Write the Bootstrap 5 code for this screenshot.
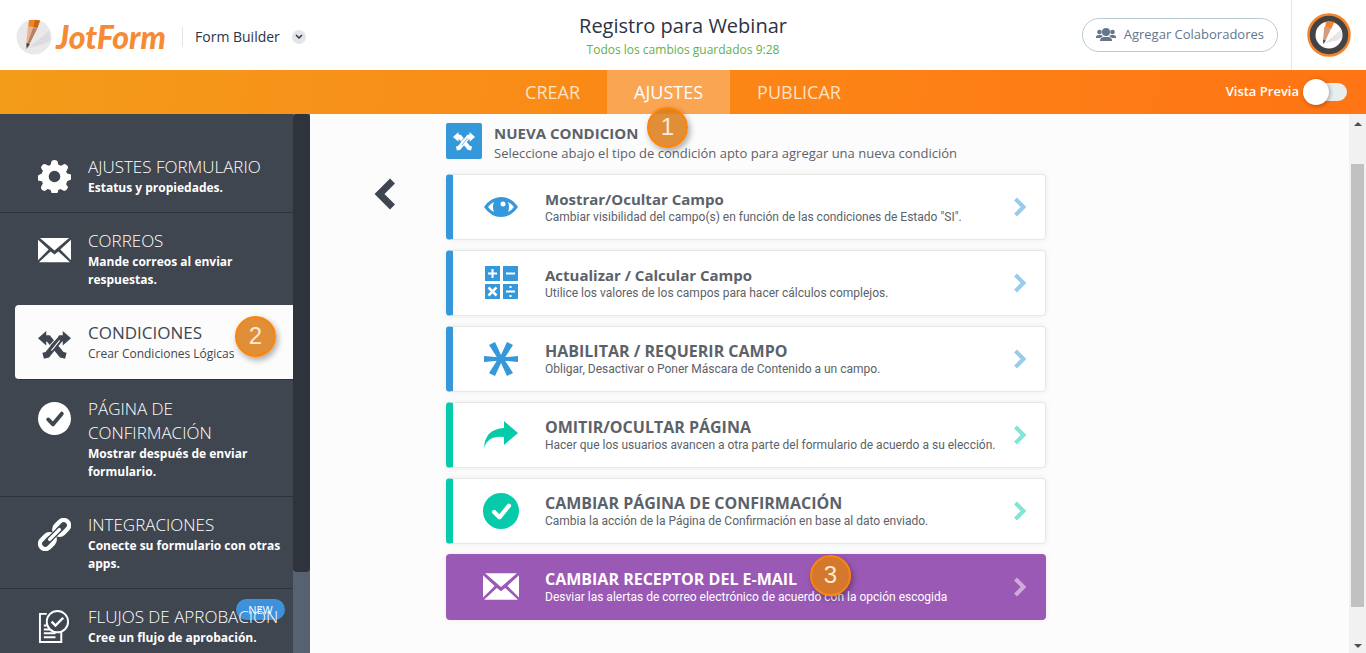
<!DOCTYPE html>
<html lang="es">
<head>
<meta charset="utf-8">
<meta name="viewport" content="width=device-width, initial-scale=1">
<title>JotForm - Registro para Webinar</title>
<link href="https://cdn.jsdelivr.net/npm/bootstrap@5.3.0/dist/css/bootstrap.min.css" rel="stylesheet">
<style>
body{font-family:"Open Sans","Noto Sans",sans-serif;font-size:12px;color:#5c6269;background:#fcfcfc}
a{text-decoration:none;color:inherit}
.topbar{height:70px;display:grid;grid-template-columns:1fr auto 1fr;background:#fff}
.wordmark{font:italic 900 32px/40px Lato,"Liberation Sans",sans-serif;color:#f78b35}
.product{font-size:14px;color:#2c3345;border-left:1px solid #e3e5e8;line-height:20px}
.drop{width:14px;height:14px;border-radius:50%;background:#e3e5e8}
.form-name{font-size:20px;line-height:28px;color:#2c3345;font-weight:400}
.saved{line-height:20px;color:#64b04c}
.invite{height:34px;border:1px solid #b9ccd2;border-radius:17px;background:#fff;color:#65768c;font-size:13px;padding:0 13px;margin-right:13px}
.account{border-left:1px solid #e3e5e8;padding:0 15px}
.modebar{height:44px;display:grid;grid-template-columns:1fr auto 1fr;background:linear-gradient(100deg,#f39c1a,#fb8716 50%,#ff7414)}
.mode{position:relative;font-size:18px;line-height:45px;height:44px;padding:0 27px;color:#ffe1c4}
.mode.current{background:#faa552;color:#fff}
.preview{color:#fff;font-size:13px;font-weight:600;padding-right:19px}
.preview input{appearance:none;margin:0;width:44px;height:18px;border-radius:9px;background:linear-gradient(90deg,transparent 14px,#e8eeee 14px);position:relative}
.preview input::before{content:"";position:absolute;left:0;top:-4px;width:26px;height:26px;border-radius:50%;background:#fff;box-shadow:1px 1px 4px #0005}
.step{position:absolute;width:41px;height:41px;border:2px solid #fb8409;border-radius:50%;background:#dc7d19dd;color:#fdebd6;font:24px/36px "Liberation Sans",sans-serif;text-align:center;box-shadow:2px 3px 6px #0005;z-index:5}
.step-mode{left:40px;top:37px}
.step-item{right:17px;top:11px}
.step-choice{left:357px;top:0}
.side{width:310px;background:#3f4650;color:#fff}
.side-list{padding-top:25px;min-width:0}
.item{position:relative;display:flex;gap:17px;padding:16px 10px 15px 38px;border-bottom:1px solid #2f343c}
.item svg{width:33px;height:33px;flex:none;margin-top:5px}
.item-name{display:block;font-size:17px;line-height:24px;font-weight:300}
.item-note{display:block;line-height:18px;font-weight:700}
.item.chosen{margin-left:15px;margin-bottom:1px;padding-left:23px;padding-right:4px;background:#fcfcfc;color:#3f4650;border-radius:4px 0 0 4px;padding-bottom:16px}
.chosen .item-name,.chosen .item-note{font-weight:400}
.chosen svg{margin-top:7px}
.item.bare{border-bottom-color:transparent}
.new{position:absolute;right:8px;top:10px;height:21px;width:49px;border-radius:11px;background:#3e92dc;line-height:22px;text-align:center;font-size:11px}
.side-track{width:17px;background:#566272}
.side-thumb{height:85%;background:#2f333c;border-radius:4px}
.back{margin:64px 50px 0 64px;border:0;background:none;padding:0}
.panel{flex:0 1 600px;padding-top:9px}
.panel-head{margin-bottom:11px}
.tile{width:36px;height:36px;background:#3498db;border-radius:2px}
.head-name{font-size:15px;line-height:20px;font-weight:700;margin:0}
.head-note{font-size:13px;line-height:20px}
.choices{gap:10px}
.choice{position:relative;display:flex;align-items:center;height:66px;border:1px solid #e8e8e6;border-left:7px solid var(--tone);border-radius:4px;background:#fff;box-shadow:0 0 6px #0001;padding:0 18px 0 30px;color:#5c6269}
.choice>svg:first-child{width:36px;height:36px;color:var(--tone)}
.choice-text{margin-left:26px;flex:1}
.choice-name{display:block;font-size:15px;line-height:20px;font-weight:700}
.choice-name.caps{font-size:16px}
.choice-note{display:block;line-height:16px;white-space:nowrap;font-family:Roboto,"Open Sans",sans-serif}
.arrow{width:14px;height:20px;color:var(--tone);opacity:.5}
.blue{--tone:#3498db}.green{--tone:#05cbaa}
.purple{--tone:#9b59b6;background:#9b59b6;color:#fff;border-color:#9b59b6}
.purple>svg:first-child{color:#fff}.purple .arrow{color:#fff}
.track{width:17px;background:#f1f1f1}
.thumb{width:13px;background:#c1c1c1;flex:1;margin:50px 0 46px}
</style>
</head>
<body class="vh-100 d-flex flex-column overflow-hidden">
<svg class="d-none" xmlns="http://www.w3.org/2000/svg">
<symbol id="pencil" viewBox="0 0 36 36"><circle cx="18" cy="18" r="17.500" fill="#e9e9ea"/><path d="M12 29 33 12l2 9-7 4z" fill="#dcdcde"/><path d="M13 1h11l-3 9-9-2z" fill="#ef8429"/><path d="m19 1 5 1-3 8-4-1z" fill="#c76716"/><path d="m12 7 9 2-7 15-4 3z" fill="#e6b597"/><path d="m17 9 4 1-7 14-3 2z" fill="#b97c65"/><path d="m10.500 24 3.500 1-3.500 5z" fill="#444"/></symbol>
<symbol id="mail" viewBox="0 0 34 26"><path fill="currentColor" d="M2 0h30L17 13zM0 2l11 10L0 23zm34 0v21L23 12zM1 25l12-11 4 3 4-3 12 11z"/></symbol>
<symbol id="cross" viewBox="0 0 32 28"><path d="M5 25 9 24 22 8h5M27 25l-4-1L10 8H5" fill="none" stroke="currentColor" stroke-width="6"/><path d="m0 8 8-7v14zm32 0-8-7v14z" fill="currentColor"/><path d="m11.500 15 8-9M13 20l8-10" stroke="var(--gap,#fcfcfc)" stroke-width="1"/></symbol>
<symbol id="tick" viewBox="0 0 34 34"><circle cx="17" cy="17" r="17" fill="currentColor"/><path d="m10.500 18 5 5 9-11" fill="none" stroke="var(--gap,#fff)" stroke-width="4" stroke-linecap="round" stroke-linejoin="round"/></symbol>
<symbol id="next" viewBox="0 0 14 20"><path d="m2.500 2 8 8-8 8" fill="none" stroke="currentColor" stroke-width="4"/></symbol>
</svg>

<header class="topbar flex-shrink-0">
  <div class="d-flex align-items-center ps-3 pt-1">
    <a href="#" class="d-flex align-items-center" aria-label="JotForm"><svg width="36" height="36"><use href="#pencil"/></svg><span class="wordmark ms-1">JotForm</span></a>
    <div class="product ps-2 ms-3 pe-1"><span class="ms-1">Form Builder</span></div>
    <button class="drop border-0 p-0 ms-2 d-flex align-items-center justify-content-center" aria-label="Productos"><svg width="8" height="6"><path d="m1 1 3 3 3-3" fill="none" stroke="#2c3345" stroke-width="1.500"/></svg></button>
  </div>
  <div class="text-center pt-2 mt-1"><h1 class="form-name m-0">Registro para Webinar</h1><div class="saved">Todos los cambios guardados 9:28</div></div>
  <div class="d-flex justify-content-end align-items-center">
    <button class="invite d-flex align-items-center gap-2"><svg width="20" height="14" fill="currentColor"><circle cx="10" cy="4" r="4"/><path d="M4 13q0-4 4-4h4q4 0 4 4z"/><circle cx="3.500" cy="4" r="2.300"/><circle cx="16.500" cy="4" r="2.300"/><path d="M0 9q0-2 3-2h2l2 1-3 2H0zm20 0q0-2-3-2h-2l-2 1 3 2h4z"/></svg>Agregar Colaboradores</button>
    <div class="account h-100 d-flex align-items-center"><a href="#" aria-label="Cuenta"><svg width="44" height="44" class="d-block"><circle cx="22" cy="22" r="20.500" fill="#434343" stroke="#f5832a" stroke-width="2.500"/><circle cx="22" cy="22" r="13.500" fill="#fff"/><svg x="8" y="8" width="28" height="28" viewBox="0 0 36 36"><path d="M12 29 33 12l2 9-7 4z" fill="#e6e6e7"/><path d="M14 1h11l-4 9-8-2z" fill="#ef8429"/><path d="m12 7 9 2-7 15-4 3z" fill="#d59b7d"/><path d="m10.500 24 3.500 1-3.500 5z" fill="#444"/></svg></svg></a></div>
  </div>
</header>

<nav class="modebar flex-shrink-0">
  <div></div>
  <div class="d-flex"><a class="mode" href="#">CREAR</a><a class="mode current" href="#">AJUSTES<span class="step step-mode">1</span></a><a class="mode" href="#">PUBLICAR</a></div>
  <div class="preview d-flex align-items-center justify-content-end gap-1"><label for="preview">Vista Previa</label><input id="preview" type="checkbox" role="switch"></div>
</nav>

<div class="d-flex flex-fill overflow-hidden">
  <aside class="side d-flex flex-shrink-0">
    <nav class="side-list flex-fill">
      <a class="item" href="#"><svg viewBox="0 0 34 34" fill="currentColor"><path fill-rule="evenodd" d="M14 1q3-2 6 0l1 4 3 1 3-2q4 1 4 4l-2 4 1 2 4 1q1 3 0 5l-4 2-1 3 2 3q-1 3-4 4l-4-2-2 1-1 3q-3 1-6 0l-1-3-3-1-3 2q-4-1-4-4l2-4-1-2-4-1q-1-3 0-5l4-2 1-3-2-3q1-4 4-4l4 2 2-1zm3 10a6 6 0 1 0 0 12 6 6 0 0 0 0-12z"/></svg><span><span class="item-name">AJUSTES FORMULARIO</span><span class="item-note">Estatus y propiedades.</span></span></a>
      <a class="item bare" href="#"><svg><use href="#mail"/></svg><span><span class="item-name">CORREOS</span><span class="item-note">Mande correos al enviar<br>respuestas.</span></span></a>
      <a class="item chosen" href="#"><svg><use href="#cross"/></svg><span><span class="item-name">CONDICIONES</span><span class="item-note">Crear Condiciones Lógicas</span></span><span class="step step-item">2</span></a>
      <a class="item" href="#" style="--gap:#3f4650"><svg><use href="#tick"/></svg><span><span class="item-name">PÁGINA DE CONFIRMACIÓN</span><span class="item-note">Mostrar después de enviar<br>formulario.</span></span></a>
      <a class="item" href="#"><svg viewBox="0 0 34 34" fill="none" stroke="currentColor" stroke-width="4.500"><rect x="-8" y="-5.500" width="17" height="11" rx="5.500" transform="translate(24 10) rotate(-45)"/><rect x="-9" y="-5.500" width="17" height="11" rx="5.500" transform="translate(10 24) rotate(-45)"/><path d="m12 22 10-10" stroke="#3f4650" stroke-width="6"/><path d="m12 22 10-10" stroke-width="3.500" stroke-linecap="round"/></svg><span><span class="item-name">INTEGRACIONES</span><span class="item-note">Conecte su formulario con otras apps.</span></span></a>
      <a class="item" href="#"><span class="new">NEW</span><svg viewBox="0 0 34 34" fill="none" stroke="currentColor" stroke-width="2"><path d="M9 4H2v29h22V22M6 20h7M6 24h12M6 28h12M6 16h3"/><circle cx="20" cy="12" r="11" fill="#3f4650"/><path d="m14 12 4 4 8-8" stroke-width="2.500"/></svg><span class="position-relative text-nowrap"><span class="item-name">FLUJOS DE APROBACIÓN</span><span class="item-note">Cree un flujo de aprobación.</span></span></a>
    </nav>
    <div class="side-track flex-shrink-0"><div class="side-thumb"></div></div>
  </aside>
  <main class="d-flex flex-fill align-items-start">
    <button class="back" aria-label="Volver"><svg class="d-block" width="22" height="32"><path d="M18.500 3 5.500 16l13 13" fill="none" stroke="#3f4650" stroke-width="7"/></svg></button>
    <section class="panel">
      <div class="panel-head d-flex"><span class="tile d-flex align-items-center justify-content-center text-white" style="--gap:#3498db"><svg width="22" height="20"><use href="#cross"/></svg></span><div class="ps-2 ms-1"><h2 class="head-name">NUEVA CONDICION</h2><div class="head-note">Seleccione abajo el tipo de condición apto para agregar una nueva condición</div></div></div>
      <div class="choices d-grid">
        <a class="choice blue" href="#"><svg viewBox="0 0 36 36"><path fill="currentColor" fill-rule="evenodd" d="M1 18Q8 8 18 8t17 10q-7 10-17 10T1 18zm4 0q3 4 6 5-2-5 0-10-4 2-6 5zm20-5q2 5 0 10 4-2 6-5-2-3-6-5z"/><circle cx="20" cy="15" r="2.500" fill="#fff"/></svg><span class="choice-text"><span class="choice-name">Mostrar/Ocultar Campo</span><span class="choice-note">Cambiar visibilidad del campo(s) en función de las condiciones de Estado "SI".</span></span><svg class="arrow"><use href="#next"/></svg></a>
        <a class="choice blue" href="#"><svg viewBox="0 0 36 36"><path fill="currentColor" d="M2 1h15v15H2zm18 0h15v15H20zM2 19h15v15H2zm18 0h15v15H20z"/><path d="M5 8.500h9M9.500 4v9M23 8.500h9M23 26.500h9M27.500 21v2M27.500 30v2" stroke="#fff" stroke-width="2"/><path d="m5.500 22.500 8 8m0-8-8 8" stroke="#fff" stroke-width="2.500"/></svg><span class="choice-text"><span class="choice-name">Actualizar / Calcular Campo</span><span class="choice-note">Utilice los valores de los campos para hacer cálculos complejos.</span></span><svg class="arrow"><use href="#next"/></svg></a>
        <a class="choice blue" href="#"><svg viewBox="0 0 36 36" fill="currentColor"><path d="M1 15l17 1.500L35 15v6l-17-1.500L1 21zM6 4l6-3 6 13 6-13 6 3-9 14 9 14-6 3-6-13-6 13-6-3 9-14z"/></svg><span class="choice-text"><span class="choice-name caps">HABILITAR / REQUERIR CAMPO</span><span class="choice-note">Obligar, Desactivar o Poner Máscara de Contenido a un campo.</span></span><svg class="arrow"><use href="#next"/></svg></a>
        <a class="choice green" href="#"><svg viewBox="0 0 36 36"><path fill="currentColor" d="M21 4l14 12-14 12v-8Q5 18 1 31 2 12 21 11z"/></svg><span class="choice-text"><span class="choice-name caps">OMITIR/OCULTAR PÁGINA</span><span class="choice-note">Hacer que los usuarios avancen a otra parte del formulario de acuerdo a su elección.</span></span><svg class="arrow"><use href="#next"/></svg></a>
        <a class="choice green" href="#"><svg><use href="#tick"/></svg><span class="choice-text"><span class="choice-name caps">CAMBIAR PÁGINA DE CONFIRMACIÓN</span><span class="choice-note">Cambia la acción de la Página de Confirmación en base al dato enviado.</span></span><svg class="arrow"><use href="#next"/></svg></a>
        <a class="choice purple" href="#"><svg><use href="#mail"/></svg><span class="choice-text"><span class="choice-name caps">CAMBIAR RECEPTOR DEL E-MAIL</span><span class="choice-note">Desviar las alertas de correo electrónico de acuerdo con la opción escogida</span></span><svg class="arrow"><use href="#next"/></svg><span class="step step-choice">3</span></a>
      </div>
    </section>
  </main>
  <div class="track d-flex flex-column align-items-center justify-content-between position-relative flex-shrink-0">
    <svg class="position-absolute top-0 mt-2" width="8" height="5"><path d="M0 4h8L4 0z" fill="#505050"/></svg>
    <div class="thumb"></div>
    <svg class="position-absolute bottom-0 mb-1" width="8" height="5"><path d="M0 0h8L4 4z" fill="#505050"/></svg>
  </div>
</div>
<script src="https://cdn.jsdelivr.net/npm/bootstrap@5.3.0/dist/js/bootstrap.bundle.min.js"></script>
</body>
</html>
